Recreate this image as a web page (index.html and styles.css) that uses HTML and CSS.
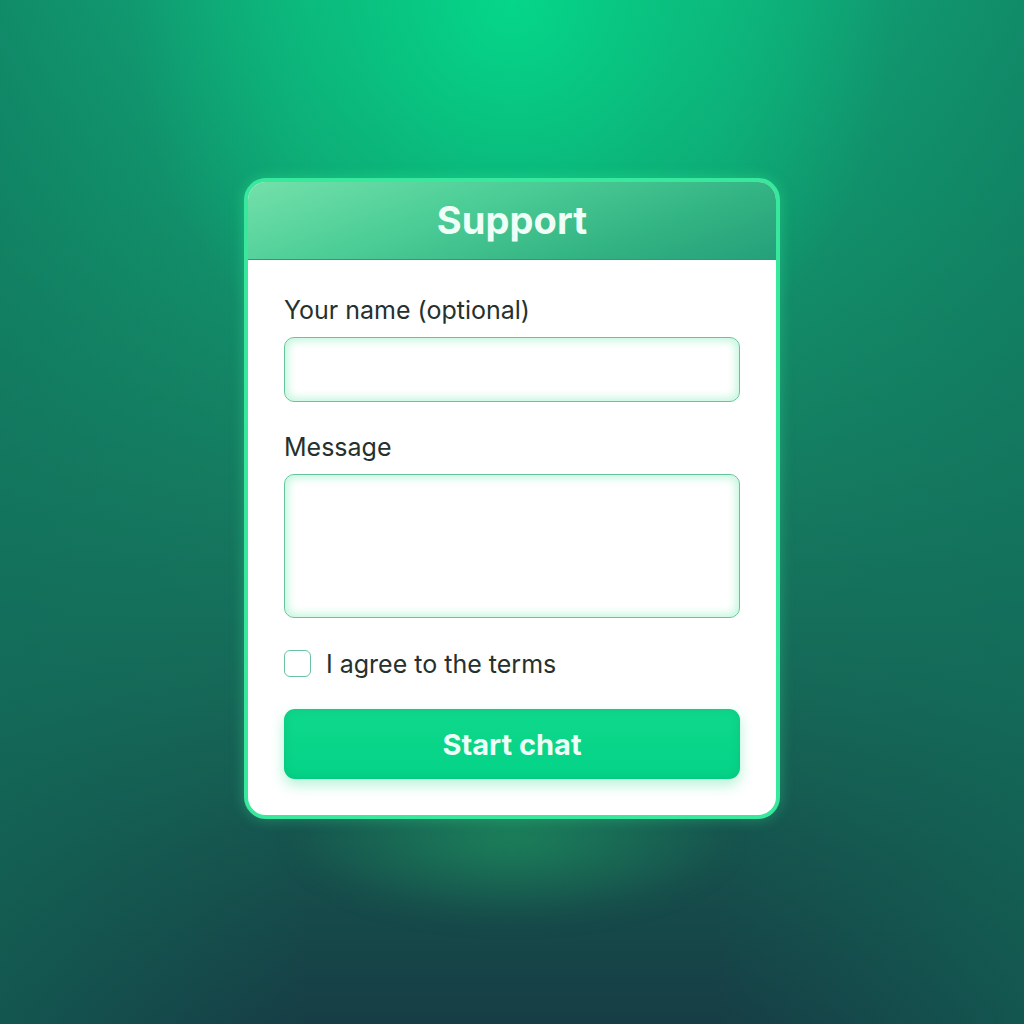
FILE: index.html
```html
<!DOCTYPE html>
<html lang="en">
<head>
<meta charset="utf-8">
<title>Support</title>
<link rel="stylesheet" href="styles.css">
</head>
<body>
<div class="stage">
  <div class="glow"></div>
  <form class="card">
    <div class="card-header">Support</div>
    <div class="card-body">
      <label class="field-label" for="name">Your name (optional)</label>
      <input class="input" id="name" type="text">
      <label class="field-label second" for="msg">Message</label>
      <textarea class="input textarea" id="msg"></textarea>
      <label class="check-row">
        <span class="checkbox"></span>
        <span class="check-text">I agree to the terms</span>
      </label>
      <button class="btn" type="button">Start chat</button>
    </div>
  </form>
</div>
</body>
</html>
```
FILE: styles.css
```css
html, body {
  margin: 0;
  padding: 0;
  width: 1024px;
  height: 1024px;
  overflow: hidden;
  background: #163d45;
}
body {
  font-family: Inter, "Noto Sans", sans-serif;
}
.stage {
  position: relative;
  width: 1024px;
  height: 1024px;
  display: flex;
  justify-content: center;
  padding-top: 178px;
  box-sizing: border-box;
  background:
    radial-gradient(ellipse 380px 440px at 512px 0px, rgba(4, 216, 138, 0.95) 0%, rgba(6, 206, 132, 0.55) 45%, rgba(8, 190, 120, 0) 100%),
    linear-gradient(90deg, rgba(16, 110, 90, 0.5) 0%, rgba(16, 110, 90, 0) 30%, rgba(16, 110, 90, 0) 70%, rgba(16, 110, 90, 0.5) 100%),
    linear-gradient(180deg, #10aa78 0%, #12976d 22%, #157f62 45%, #166656 68%, #164f4c 85%, #163d45 100%);
}
.glow {
  position: absolute;
  left: 290px;
  top: 800px;
  width: 444px;
  height: 120px;
  border-radius: 40%;
  background: radial-gradient(ellipse at 50% 30%, rgba(30, 145, 95, 0.75) 0%, rgba(30, 145, 95, 0) 72%);
  filter: blur(12px);
}
.card {
  position: relative;
  width: 536px;
  height: 641px;
  box-sizing: border-box;
  border: 4px solid #38e89c;
  border-radius: 22px;
  background: #ffffff;
  overflow: hidden;
  box-shadow: 0 0 14px rgba(60, 240, 160, 0.35);
  margin: 0;
}
.card-header {
  height: 78px;
  display: flex;
  align-items: center;
  justify-content: center;
  color: #effff7;
  font-weight: 700;
  font-size: 38px;
  letter-spacing: 0.1px;
  background:
    linear-gradient(160deg, #74e0aa 0%, #4fcf98 35%, #34b584 70%, #25a07a 100%);
  border-bottom: 1px solid #2b9c76;
  box-sizing: border-box;
  padding-bottom: 2px;
}
.card-body {
  padding: 36px 36px 0 36px;
  display: flex;
  flex-direction: column;
}
.field-label {
  font-size: 25px;
  line-height: 28px;
  color: #26312d;
  margin-bottom: 13px;
}
.field-label.second {
  margin-top: 31px;
}
.input {
  display: block;
  width: 100%;
  height: 65px;
  box-sizing: border-box;
  border: 1.5px solid #66c49c;
  border-radius: 10px;
  background: #ffffff;
  box-shadow: inset 0 0 8px 3px rgba(120, 235, 180, 0.45);
  outline: none;
  margin: 0;
  padding: 0 14px;
  font-family: inherit;
  font-size: 18px;
}
.textarea {
  height: 144px;
  resize: none;
}
.check-row {
  display: flex;
  align-items: center;
  gap: 15px;
  margin-top: 32px;
  height: 27px;
}
.checkbox {
  width: 27px;
  height: 27px;
  box-sizing: border-box;
  border: 1.5px solid #6cc2a0;
  border-radius: 6px;
  background: #fff;
}
.check-text {
  font-size: 25px;
  color: #26312d;
}
.btn {
  margin-top: 32px;
  height: 70px;
  width: 100%;
  border: none;
  border-radius: 11px;
  background: linear-gradient(180deg, #0fd88c 0%, #04d387 100%);
  color: #eefff7;
  font-family: inherit;
  font-weight: 700;
  font-size: 29px;
  box-shadow: 0 6px 14px rgba(40, 220, 140, 0.35), inset 0 0 8px rgba(0, 150, 90, 0.25);
  padding: 0;
}
```
